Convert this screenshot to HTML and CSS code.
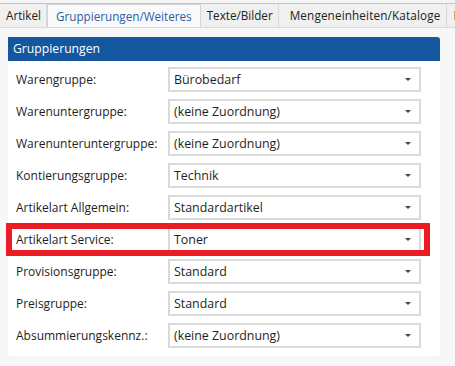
FILE: index.html
```html
<!DOCTYPE html>
<html lang="de">
<head>
    <meta charset="UTF-8">
    <meta name="viewport" content="width=device-width, initial-scale=1.0">
    <title>Artikel</title>
    <link rel="stylesheet" href="styles.css">
</head>
<body>
    <div class="topline"></div>
    <ul class="tabs">
        <li>Artikel</li>
        <li class="active">Gruppierungen/Weiteres</li>
        <li>Texte/Bilder</li>
        <li class="wide">Mengeneinheiten/Kataloge</li>
        <li>Einkauf</li>
    </ul>

    <div class="content">
        <div class="panel">
            <div class="panelHead">Gruppierungen</div>
            <div class="form">
                <label>Warengruppe:</label>
                <div class="select">Bürobedarf</div>
                <label>Warenuntergruppe:</label>
                <div class="select">(keine Zuordnung)</div>
                <label>Warenunteruntergruppe:</label>
                <div class="select">(keine Zuordnung)</div>
                <label>Kontierungsgruppe:</label>
                <div class="select">Technik</div>
                <label>Artikelart Allgemein:</label>
                <div class="select">Standardartikel</div>
                <label>Artikelart Service:</label>
                <div class="select">Toner</div>
                <label>Provisionsgruppe:</label>
                <div class="select">Standard</div>
                <label>Preisgruppe:</label>
                <div class="select">Standard</div>
                <label>Absummierungskennz.:</label>
                <div class="select">(keine Zuordnung)</div>
            </div>
            <!-- rote Markierung über der Zeile "Artikelart Service" -->
            <div class="mark"></div>
        </div>
    </div>
</body>
</html>
```

FILE: styles.css
```css
*{
    margin: 0;
    padding: 0;
    box-sizing: border-box;
}
body{
    width: 455px;
    height: 366px;
    overflow: hidden;
    background: #f7f7f7;
    font-family: "Open Sans", "Noto Sans", sans-serif;
    font-size: 12px;
    color: #1e1e1e;
}
.topline{
    height: 4px;
    background: #f4f4f4;
    border-bottom: 1px solid #c4c4c4;
}
.tabs{
    display: flex;
    align-items: flex-end;
    height: 24px;
    overflow: hidden;
    background: #f0f0f0;
    border-bottom: 1px solid #d9d9d9;
    list-style: none;
    white-space: nowrap;
}
.tabs li{
    flex-shrink: 0;
    height: 23px;
    line-height: 22px;
    padding: 0 5px 0 6px;
    border-right: 1px solid #d9d9d9;
    font-size: 11.7px;
    color: #222;
}
.tabs li.active{
    height: 24px;
    margin-bottom: -1px;
    padding: 0 8px;
    background: #f9f9f9;
    border: 1px solid #d4d4d4;
    border-bottom: none;
    color: #2d5fa8;
}
.tabs li.wide{
    padding: 0 6px 0 11px;
    letter-spacing: 0.15px;
}
.content{
    padding: 9px 15px 0 8px;
}
.panel{
    position: relative;
    width: 432px;
    background: #fff;
    border-radius: 3px;
}
.panelHead{
    height: 24px;
    line-height: 24px;
    padding-left: 5px;
    background: #14579e;
    color: #fff;
    font-size: 12.2px;
    border-radius: 0 3px 0 0;
}
.form{
    display: grid;
    grid-template-columns: 152px 253px;
    grid-auto-rows: 25px;
    row-gap: 7px;
    align-items: center;
    padding: 6px 0 8px 8px;
}
.form label{
    font-size: 12px;
}
.select{
    position: relative;
    height: 25px;
    line-height: 21px;
    padding-left: 4px;
    border: 2px solid #dadada;
    font-size: 12.4px;
}
.select::after{
    content: "";
    position: absolute;
    right: 8px;
    top: 9px;
    border-left: 3px solid transparent;
    border-right: 3px solid transparent;
    border-top: 3px solid #444;
}
.mark{
    position: absolute;
    left: -2px;
    top: 186px;
    width: 424px;
    height: 33px;
    border: 6px solid #ec1c24;
}
```
